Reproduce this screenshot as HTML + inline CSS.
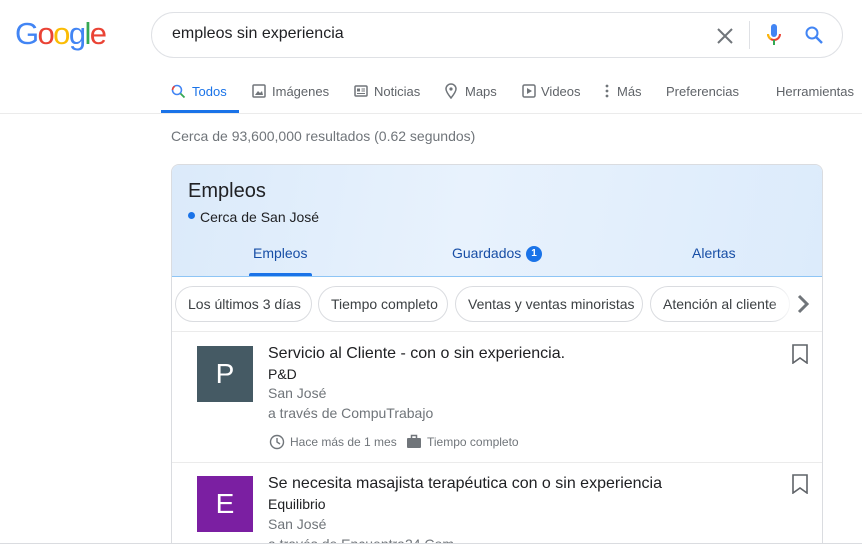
<!DOCTYPE html>
<html style="overflow:hidden;width:862px;height:548px"><head><meta charset="utf-8"><style>
*{margin:0;padding:0;box-sizing:border-box}
body{width:862px;height:548px;overflow:hidden;background:#fff;font-family:"Liberation Sans",Arial,sans-serif;position:relative;color:#202124}
.a{position:absolute;white-space:nowrap}
.chip{position:absolute;top:286px;height:36px;border:1px solid #dadce0;border-radius:18px;font-size:14px;line-height:34px;padding:0 12px;color:#3c4043;background:#fff;white-space:nowrap}
.nav{font-size:13px;color:#5f6368;top:84px}
</style></head><body>
<div class="a" style="left:15px;top:16px;font-size:31px;letter-spacing:-1.6px;"><span style="color:#4285f4">G</span><span style="color:#ea4335">o</span><span style="color:#fbbc05">o</span><span style="color:#4285f4">g</span><span style="color:#34a853">l</span><span style="color:#ea4335">e</span></div>
<div class="a" style="left:151px;top:12px;width:692px;height:46px;border:1px solid #dfe1e5;border-radius:23px"></div>
<div class="a" style="left:172px;top:25px;font-size:16px;color:#202124">empleos sin experiencia</div>
<svg class="a" style="left:715px;top:26px" width="20" height="20" viewBox="0 0 20 20"><path d="M3 3L17 17M17 3L3 17" stroke="#70757a" stroke-width="2"/></svg>
<div class="a" style="left:749px;top:21px;width:1px;height:28px;background:#dfe1e5"></div>
<svg class="a" style="left:765px;top:23px" width="18" height="24" viewBox="0 0 18 24"><rect x="6" y="1" width="6" height="13" rx="3" fill="#4285f4"/><path d="M3 11a6 6 0 0 0 12 0" stroke="#ea4335" stroke-width="2" fill="none"/><path d="M3 11a6 6 0 0 0 3 5" stroke="#fbbc05" stroke-width="2" fill="none"/><rect x="8" y="17" width="2" height="5" fill="#34a853"/></svg>
<svg class="a" style="left:804px;top:25px" width="20" height="20" viewBox="0 0 20 20"><circle cx="8" cy="8" r="5.5" stroke="#4285f4" stroke-width="2" fill="none"/><path d="M12 12l6 6" stroke="#4285f4" stroke-width="2.4"/></svg>

<svg class="a" style="left:171px;top:84px" width="15" height="15" viewBox="0 0 15 15"><circle cx="6" cy="6" r="4.5" stroke="#4285f4" stroke-width="1.6" fill="none"/><path d="M1.6 6a4.5 4.5 0 0 1 2-3.7" stroke="#ea4335" stroke-width="1.6" fill="none"/><path d="M9.5 9.5l4 4" stroke="#34a853" stroke-width="1.8"/></svg>
<div class="a nav" style="left:192px;color:#1a73e8">Todos</div>
<div class="a" style="left:161px;top:110px;width:78px;height:3px;background:#1a73e8"></div>
<svg class="a" style="left:252px;top:84px" width="14" height="14" viewBox="0 0 14 14"><rect x="1" y="1" width="12" height="12" rx="1" stroke="#70757a" stroke-width="1.5" fill="none"/><path d="M3 11l3-4 2 2 2-2 1 4z" fill="#70757a"/></svg>
<div class="a nav" style="left:272px">Imágenes</div>
<svg class="a" style="left:354px;top:85px" width="14" height="12" viewBox="0 0 14 12"><rect x="1" y="1" width="12" height="10" rx="1" stroke="#70757a" stroke-width="1.5" fill="none"/><rect x="3" y="3.5" width="3" height="3" fill="#70757a"/><path d="M7.5 4h3.5M7.5 6h3.5M3 8.5h8" stroke="#70757a"/></svg>
<div class="a nav" style="left:374px">Noticias</div>
<svg class="a" style="left:445px;top:83px" width="12" height="16" viewBox="0 0 12 16"><path d="M6 15C2 10 1 8 1 6a5 5 0 0 1 10 0c0 2-1 4-5 9z" stroke="#70757a" stroke-width="1.5" fill="none"/><circle cx="6" cy="6" r="1.6" fill="#70757a"/></svg>
<div class="a nav" style="left:465px">Maps</div>
<svg class="a" style="left:522px;top:84px" width="14" height="14" viewBox="0 0 14 14"><rect x="1" y="1" width="12" height="12" rx="1.5" stroke="#70757a" stroke-width="1.5" fill="none"/><path d="M5 4v6l5-3z" fill="#70757a"/></svg>
<div class="a nav" style="left:541px">Videos</div>
<svg class="a" style="left:605px;top:84px" width="4" height="14" viewBox="0 0 4 14"><circle cx="2" cy="2" r="1.4" fill="#70757a"/><circle cx="2" cy="7" r="1.4" fill="#70757a"/><circle cx="2" cy="12" r="1.4" fill="#70757a"/></svg>
<div class="a nav" style="left:617px">Más</div>
<div class="a nav" style="left:666px">Preferencias</div>
<div class="a nav" style="left:776px">Herramientas</div>
<div class="a" style="left:0;top:113px;width:862px;height:1px;background:#ebebeb"></div>

<div class="a" style="left:171px;top:128px;font-size:14px;color:#70757a">Cerca de 93,600,000 resultados (0.62 segundos)</div>

<div class="a" style="left:171px;top:164px;width:652px;height:400px;border:1px solid #dadce0;border-radius:8px;overflow:hidden">
 <div style="position:absolute;left:0;top:0;width:100%;height:112px;background:linear-gradient(100deg,#dbeafa 0%,#e8f2fd 45%,#dcebfb 100%);border-bottom:1px solid #8ec5f5"></div>
</div>
<div class="a" style="left:188px;top:180px;font-size:20px;color:#202124">Empleos</div>
<div class="a" style="left:188px;top:212px;width:7px;height:7px;border-radius:50%;background:#1a73e8"></div>
<div class="a" style="left:200px;top:209px;font-size:14px;color:#202124">Cerca de San José</div>
<div class="a" style="left:253px;top:245px;font-size:14px;color:#174ea6">Empleos</div>
<div class="a" style="left:249px;top:273px;width:63px;height:3px;background:#1a73e8;border-radius:2px 2px 0 0"></div>
<div class="a" style="left:452px;top:245px;font-size:14px;color:#174ea6">Guardados</div>
<div class="a" style="left:526px;top:246px;width:16px;height:16px;border-radius:50%;background:#1a73e8;color:#fff;font-size:10px;font-weight:bold;text-align:center;line-height:16px">1</div>
<div class="a" style="left:692px;top:245px;font-size:14px;color:#174ea6">Alertas</div>

<div class="chip" style="left:175px;width:137px">Los últimos 3 días</div>
<div class="chip" style="left:318px;width:130px">Tiempo completo</div>
<div class="chip" style="left:455px;width:188px">Ventas y ventas minoristas</div>
<div class="chip" style="left:650px;width:140px;overflow:hidden">Atención al cliente</div>
<div class="a" style="left:770px;top:286px;width:52px;height:36px;background:linear-gradient(90deg,rgba(255,255,255,0),#fff 50%)"></div>
<svg class="a" style="left:796px;top:293px" width="14" height="22" viewBox="0 0 14 22"><path d="M3 3l8 8-8 8" stroke="#70757a" stroke-width="3" fill="none"/></svg>
<div class="a" style="left:172px;top:331px;width:650px;height:1px;background:#ebebeb"></div>

<div class="a" style="left:197px;top:346px;width:56px;height:56px;background:#455a64;color:#fff;font-size:28px;text-align:center;line-height:56px">P</div>
<div class="a" style="left:268px;top:345px;font-size:16px;color:#202124">Servicio al Cliente - con o sin experiencia.</div>
<div class="a" style="left:268px;top:366px;font-size:14px;color:#202124">P&amp;D</div>
<div class="a" style="left:268px;top:385px;font-size:14px;color:#70757a">San José</div>
<div class="a" style="left:268px;top:405px;font-size:14px;color:#70757a">a través de CompuTrabajo</div>
<svg class="a" style="left:269px;top:434px" width="16" height="16" viewBox="0 0 16 16"><circle cx="8" cy="8" r="6.5" stroke="#70757a" stroke-width="1.4" fill="none"/><path d="M8 4v4l3 2" stroke="#70757a" stroke-width="1.4" fill="none"/></svg>
<div class="a" style="left:290px;top:435px;font-size:12px;color:#70757a">Hace más de 1 mes</div>
<svg class="a" style="left:406px;top:433px" width="16" height="16" viewBox="0 0 16 16"><rect x="1" y="5" width="14" height="10" rx="1" fill="#70757a"/><path d="M5.5 5V2.5h5V5" stroke="#70757a" stroke-width="1.5" fill="none"/></svg>
<div class="a" style="left:427px;top:435px;font-size:12px;color:#70757a">Tiempo completo</div>
<svg class="a" style="left:791px;top:344px" width="18" height="20" viewBox="0 0 18 20"><path d="M2 1h14v18l-7-5-7 5z" stroke="#5f6368" stroke-width="1.6" fill="none"/></svg>
<div class="a" style="left:172px;top:462px;width:650px;height:1px;background:#ebebeb"></div>

<div class="a" style="left:197px;top:476px;width:56px;height:56px;background:#7b1fa2;color:#fff;font-size:28px;text-align:center;line-height:56px">E</div>
<div class="a" style="left:268px;top:475px;font-size:16px;color:#202124">Se necesita masajista terapéutica con o sin experiencia</div>
<div class="a" style="left:268px;top:496px;font-size:14px;color:#202124">Equilibrio</div>
<div class="a" style="left:268px;top:516px;font-size:14px;color:#70757a">San José</div>
<div class="a" style="left:268px;top:536px;font-size:14px;color:#70757a">a través de Encuentra24.Com</div>
<svg class="a" style="left:791px;top:474px" width="18" height="20" viewBox="0 0 18 20"><path d="M2 1h14v18l-7-5-7 5z" stroke="#5f6368" stroke-width="1.6" fill="none"/></svg>
<div class="a" style="left:0;top:543px;width:862px;height:5px;background:#fff;border-top:1px solid #dadce0"></div>
</body></html>
